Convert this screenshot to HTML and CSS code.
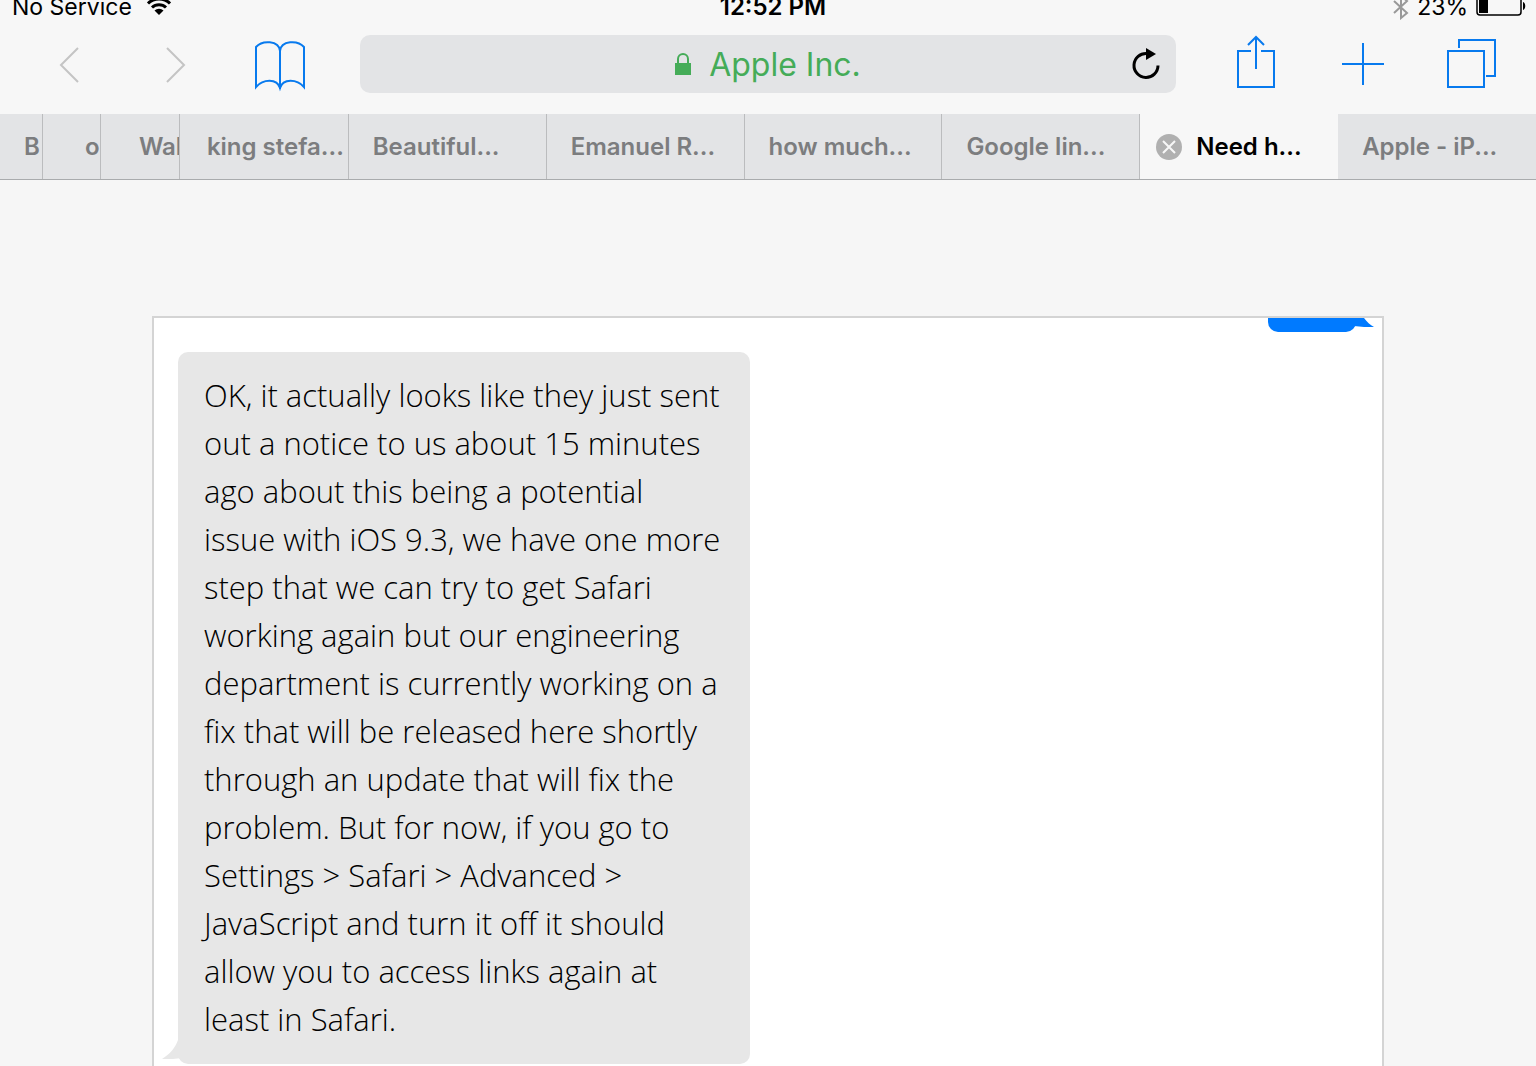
FILE: index.html
```
<!DOCTYPE html>
<html lang="en">
<head>
    <meta charset="UTF-8">
    <meta name="viewport" content="width=device-width, initial-scale=1.0">
    <title>Need help</title>
    <link rel="stylesheet" href="styles.css">
</head>
<body>
    <header class="browser">
        <div class="status-bar">
            <div class="status-left">
                <span>No Service</span>
                <svg width="26" height="20" viewBox="0 0 26 20" fill="none" stroke="#000" stroke-width="3">
                    <path d="M2 6.500a15.500 15.500 0 0 1 22 0M6 10.500a10 10 0 0 1 14 0"/>
                    <path d="M13 18L8.500 13.500a6.500 6.500 0 0 1 9 0z" fill="#000" stroke="none"/>
                </svg>
            </div>
            <span class="clock">12:52 PM</span>
            <div class="status-right">
                <svg width="16" height="26" viewBox="0 0 16 26" fill="none" stroke="#999" stroke-width="2">
                    <path d="M1 7l13 12-6 5V2l6 5L1 19"/>
                </svg>
                <span>23%</span>
                <svg class="battery" width="50" height="26" viewBox="0 0 50 26">
                    <rect x="1" y="1" width="44" height="20" rx="3" fill="none" stroke="#000" stroke-width="1.5"/>
                    <path d="M3 3h9v16H3zM47 8c3 1 3 7 0 8z"/>
                </svg>
            </div>
        </div>

        <div class="toolbar">
            <nav class="tools tools-left">
                <button class="tool tool-off" aria-label="Back">
                    <svg width="50" height="56" viewBox="0 0 50 56"><path d="M34 12L17 29l17 17"/></svg>
                </button>
                <button class="tool tool-off" aria-label="Forward">
                    <svg width="50" height="56" viewBox="0 0 50 56"><path d="M17 12l17 17-17 17"/></svg>
                </button>
                <button class="tool" aria-label="Bookmarks">
                    <svg width="50" height="56" viewBox="0 0 50 56"><path d="M24 15C23 4 6 4 0 11v40c7-8 21-9 24 1 3-10 17-9 24-1V11C42 4 25 4 24 15zV53"/></svg>
                </button>
            </nav>
            <div class="address">
                <button class="site">
                    <svg width="16" height="24" viewBox="0 0 16 24"><path d="M3 11V7a5 5 0 0 1 10 0v4" fill="none" stroke="#45ac58" stroke-width="2"/><path d="M0 11h16v12H0z" fill="#45ac58"/></svg>
                    <span>Apple Inc.</span>
                </button>
                <button class="reload" aria-label="Reload">
                    <svg width="28" height="32" viewBox="0 0 28 32"><path d="M15 5.500a12 12 0 1 0 11 12" fill="none" stroke="#000" stroke-width="3"/><path d="M14 0l10 6-10 6z"/></svg>
                </button>
            </div>
            <nav class="tools tools-right">
                <button class="tool" aria-label="Share">
                    <svg width="50" height="56" viewBox="0 0 50 56"><path d="M20 15H7v36h36V15H30M25 33V1M17 9l8-8 8 8"/></svg>
                </button>
                <button class="tool" aria-label="New tab">
                    <svg width="50" height="56" viewBox="0 0 50 56"><path d="M3 28h42M24 7v42"/></svg>
                </button>
                <button class="tool" aria-label="Show tabs">
                    <svg width="50" height="56" viewBox="0 0 50 56"><path d="M1 15h36v36H1zM12 12V4h36v36h-9"/></svg>
                </button>
            </nav>
        </div>

        <nav class="tabs">
            <a href="#" class="tab">B</a>
            <a href="#" class="tab tab-narrow">o</a>
            <a href="#" class="tab tab-short">Wal</a>
            <a href="#" class="tab tab-medium">king stefa...</a>
            <a href="#" class="tab">Beautiful...</a>
            <a href="#" class="tab">Emanuel R...</a>
            <a href="#" class="tab">how much...</a>
            <a href="#" class="tab">Google lin...</a>
            <div class="tab tab-active">
                <button class="close" aria-label="Close tab">
                    <svg width="26" height="26" viewBox="0 0 26 26"><circle cx="13" cy="13" r="13" fill="#b0b0b0"/><path d="M7 7l12 12M19 7L7 19" stroke="#f7f7f7" stroke-width="2"/></svg>
                </button>
                <a href="#">Need h...</a>
            </div>
            <a href="#" class="tab">Apple - iP...</a>
        </nav>
    </header>

    <main class="page">
        <section class="chat">
            <div class="message message-sent">
                <svg class="tail" width="20" height="10" viewBox="0 0 20 10"><path d="M0 0h10c3 4 6 7 10 9-7 0-13 0-20-1z" fill="#007aff"/></svg>
            </div>
            <div class="message message-received">
                <p>
                    OK, it actually looks like they just sent<br>
                    out a notice to us about 15 minutes<br>
                    ago about this being a potential<br>
                    issue with iOS 9.3, we have one more<br>
                    step that we can try to get Safari<br>
                    working again but our engineering<br>
                    department is currently working on a<br>
                    fix that will be released here shortly<br>
                    through an update that will fix the<br>
                    problem. But for now, if you go to<br>
                    Settings &gt; Safari &gt; Advanced &gt;<br>
                    JavaScript and turn it off it should<br>
                    allow you to access links again at<br>
                    least in Safari.
                </p>
                <svg class="tail" width="24" height="20" viewBox="0 0 24 20"><path d="M16 0C13 8 8 14 0 19c8 0 14 0 20-1l4-18z" fill="#e7e7e7"/></svg>
            </div>
        </section>
    </main>
</body>
</html>
```
FILE: styles.css
```
* {
    box-sizing: border-box;
}
body {
    display: flex;
    flex-direction: column;
    height: 100vh;
    margin: 0;
    overflow: hidden;
    font-family: Inter, "Liberation Sans", sans-serif;
    background: #f6f6f6;
    color: #000;
}
button {
    padding: 0;
    border: none;
    background: none;
    font: inherit;
    cursor: pointer;
}
svg {
    display: block;
    flex: none;
}
a {
    color: inherit;
    text-decoration: none;
}
.browser {
    flex: none;
    background: #f7f7f7;
}

/* status bar */
.status-bar {
    display: grid;
    grid-template-columns: 1fr auto 1fr;
    align-items: center;
    height: 14px;
    padding: 0 10px 0 12px;
    font-size: 23px;
    line-height: 14px;
}
.status-left,
.status-right {
    display: flex;
    align-items: center;
    height: 14px;
    gap: 14px;
}
.status-right {
    justify-content: flex-end;
    gap: 8px;
}
.clock {
    padding-left: 8px;
    font-size: 24px;
    font-weight: 600;
}

/* toolbar */
.toolbar {
    display: flex;
    align-items: center;
    height: 100px;
}
.tools {
    display: flex;
    flex: none;
}
.tools-left {
    gap: 56px;
    padding: 0 54px 0 44px;
}
.tools-right {
    gap: 58px;
    padding: 0 39px 0 55px;
}
.tool svg {
    overflow: visible;
    fill: none;
    stroke: #087aee;
    stroke-width: 2;
}
.tool-off svg {
    stroke: #c4c4c4;
}
.address {
    display: grid;
    grid-template-columns: 1fr auto 1fr;
    align-items: center;
    flex: 1;
    height: 58px;
    padding: 0 16px;
    border-radius: 10px;
    background: #e3e4e6;
}
.site {
    display: flex;
    align-items: center;
    grid-column: 2;
    gap: 18px;
    color: #45ac58;
    font-size: 32px;
}
.reload {
    justify-self: end;
}

/* tabs */
.tabs {
    display: grid;
    grid-template-columns: 43fr 58fr 79fr 169fr repeat(6, 198fr);
    height: 66px;
    border-bottom: 1px solid #a9abad;
    color: #7c7d7f;
    font-size: 24px;
    font-weight: 600;
    line-height: 65px;
}
.tab {
    min-width: 0;
    padding-left: 24px;
    overflow: hidden;
    white-space: nowrap;
    background: #e3e4e6;
    border-right: 1px solid #bbbcbe;
}
.tab:last-child {
    border-right: none;
}
.tab-narrow {
    padding-left: 42px;
}
.tab-short {
    padding-left: 38px;
}
.tab-medium {
    padding-left: 27px;
}
.tab-active {
    display: flex;
    align-items: center;
    gap: 14px;
    padding-left: 16px;
    border-right: none;
    background: #f7f7f7;
    color: #000;
}

/* chat page */
.page {
    flex: 1;
    min-height: 0;
    overflow: hidden;
    padding: 136px 152px 0;
}
.chat {
    display: flex;
    flex-direction: column;
    gap: 20px;
    padding: 0 26px 60px 24px;
    border: 2px solid #d4d4d4;
    background: #fff;
}
.message {
    position: relative;
}
.message-sent {
    align-self: flex-end;
    width: 88px;
    height: 14px;
    border-radius: 0 0 10px 10px;
    background: #007aff;
}
.message-received {
    align-self: flex-start;
    max-width: 100%;
    width: 572px;
    padding: 19px 26px 21px;
    border-radius: 10px;
    background: #e7e7e7;
}
.message p {
    margin: 0;
    font-family: "Open Sans", "Noto Sans", sans-serif;
    font-size: 31px;
    font-weight: 300;
    line-height: 48px;
    white-space: nowrap;
}
.tail {
    position: absolute;
}
.message-sent .tail {
    top: 0;
    right: -18px;
}
.message-received .tail {
    bottom: 4px;
    left: -16px;
}
```
